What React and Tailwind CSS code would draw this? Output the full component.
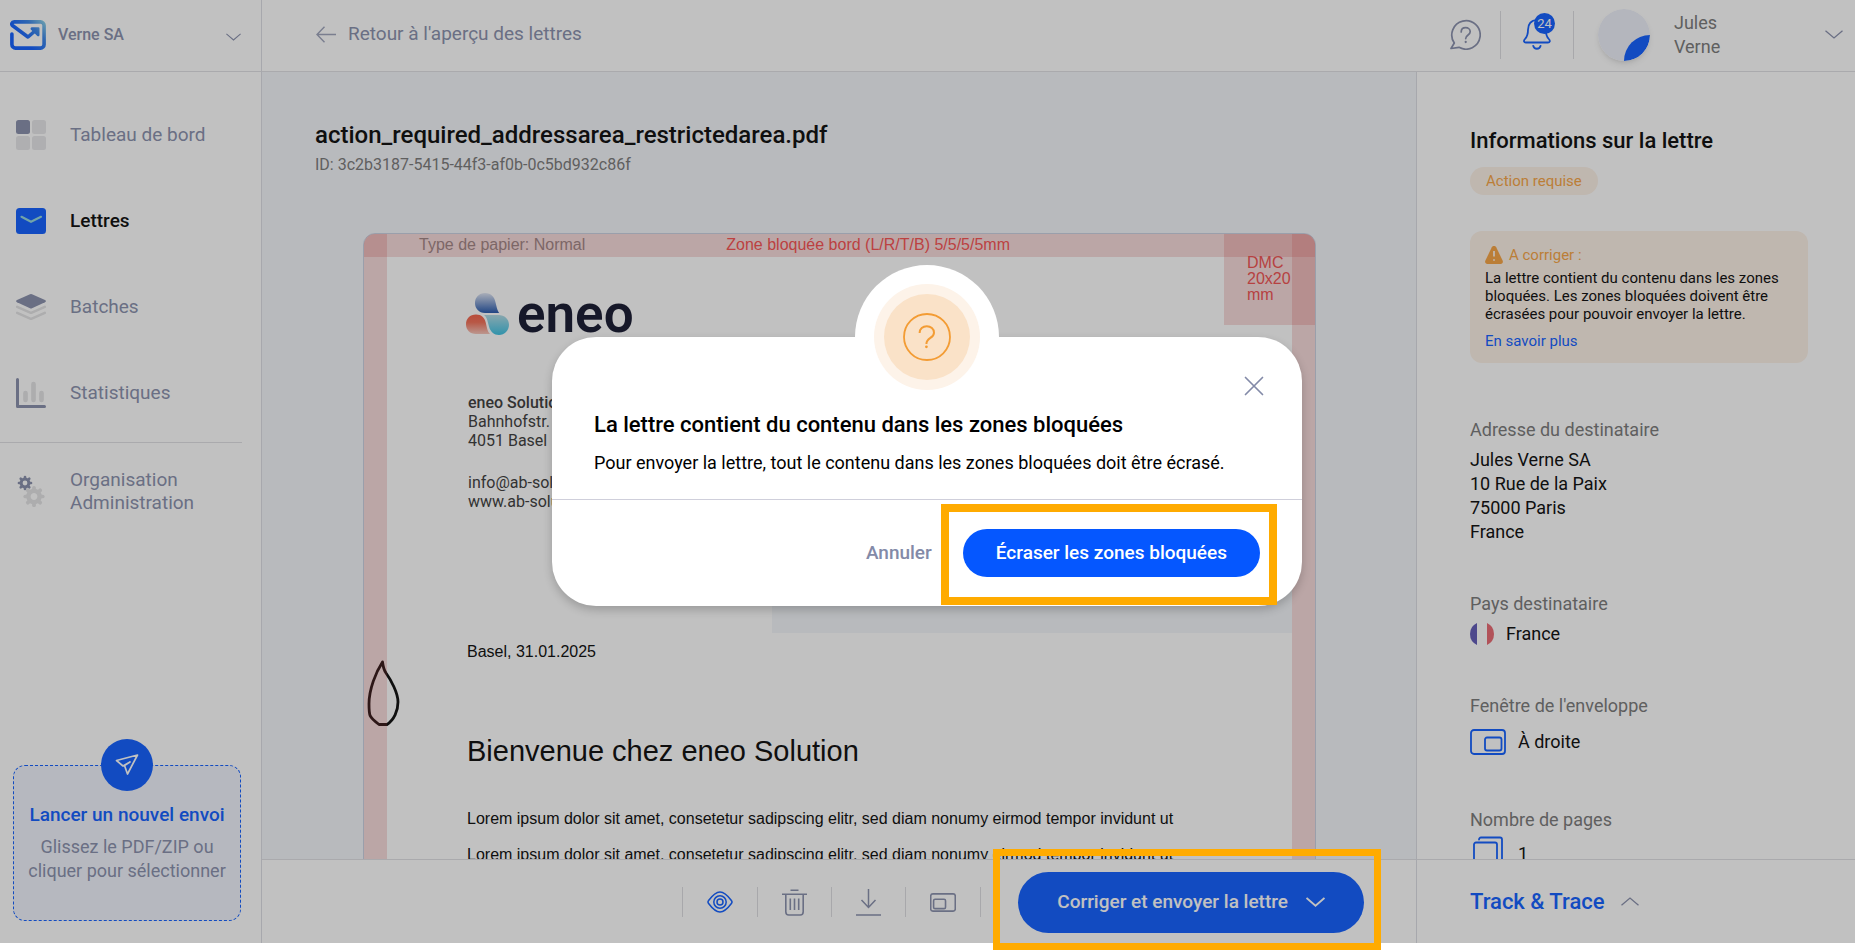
import React from "react";

const nav = [
  { label: "Tableau de bord", icon: DashboardIcon },
  { label: "Lettres", icon: LettersIcon, active: true },
  { label: "Batches", icon: BatchesIcon },
  { label: "Statistiques", icon: StatsIcon },
];

function LogoIcon() {
  return (
    <svg width="36" height="30" viewBox="0 0 36 30" fill="none" aria-hidden="true">
      <defs>
        <linearGradient id="brand" x1="14" y1="20" x2="35" y2="1" gradientUnits="userSpaceOnUse">
          <stop offset="0" stopColor="#0557ff" />
          <stop offset="0.55" stopColor="#2f7fe8" />
          <stop offset="1" stopColor="#86cfe4" />
        </linearGradient>
      </defs>
      <path d="M1.9 14v10.5a3.6 3.6 0 0 0 3.6 3.6h25a3.6 3.6 0 0 0 3.6-3.6v-19a3.6 3.6 0 0 0-3.6-3.6H4.2C1.8 1.9 1 4.300 2.800 5.800L18 17l7.500-6.500" stroke="url(#brand)" strokeWidth="3.6" strokeLinecap="round" strokeLinejoin="round" />
      <path d="M22 7.200h6.500a1 1 0 0 1 1 1V15c0 1.300-1.300 1.700-2.200.9l-6-5.800C20 8.800 20.500 7.200 22 7.200z" fill="url(#brand)" />
    </svg>
  );
}

function Chevron({ up, className, w = 18, h = 9, sw = 1.3 }) {
  return (
    <svg className={className} width={w} height={h} viewBox="0 0 18 9" fill="none" stroke="currentColor" strokeWidth={sw} aria-hidden="true">
      <path d={up ? "M.5 8.300 9 1l8.500 7.300" : "M.5.7 9 8 17.500.7"} />
    </svg>
  );
}

function DashboardIcon() {
  return (
    <svg width="30" height="30" viewBox="0 0 30 30" aria-hidden="true">
      <rect width="14" height="14" rx="2.500" fill="#838aa8" />
      <rect x="16" width="14" height="14" rx="2.500" fill="#e6e6e8" />
      <rect y="16" width="14" height="14" rx="2.500" fill="#e6e6e8" />
      <rect x="16" y="16" width="14" height="14" rx="2.500" fill="#e6e6e8" />
    </svg>
  );
}
function LettersIcon() {
  return (
    <svg width="30" height="30" viewBox="0 0 30 30" fill="none" aria-hidden="true">
      <rect y="2" width="30" height="26" rx="3.500" fill="#0557ff" />
      <path d="m5.500 10.800 9.500 5 10-5" stroke="#8fd6dc" strokeWidth="2.200" strokeLinecap="round" strokeLinejoin="round" />
    </svg>
  );
}
function BatchesIcon() {
  return (
    <svg width="30" height="30" viewBox="0 0 30 30" fill="none" aria-hidden="true">
      <path d="M14 2.300a2.500 2.500 0 0 1 2 0l13 5.800c1.200.6 1.200 1.500 0 2.100l-13 6a2.500 2.500 0 0 1-2 0L1 10.200c-1.200-.6-1.200-1.500 0-2.100z" fill="#838aa8" />
      <path d="m1.200 14.800 13 5.800a2 2 0 0 0 1.600 0l13-5.800M1.200 20.800l13 5.800a2 2 0 0 0 1.600 0l13-5.800" stroke="#e2e2e4" strokeWidth="2.400" strokeLinecap="round" />
    </svg>
  );
}
function StatsIcon() {
  return (
    <svg width="30" height="30" viewBox="0 0 30 30" fill="none" strokeLinecap="round" aria-hidden="true">
      <path d="M1.500 1.500v27h27" stroke="#838aa8" strokeWidth="3" strokeLinejoin="round" />
      <path d="M9.500 15v7M17.500 6v16M25.500 15v7" stroke="#e2e2e4" strokeWidth="4.600" />
    </svg>
  );
}
function Gear({ cx, cy, r, color, teeth, hole }) {
  return (
    <g transform={`translate(${cx} ${cy})`} fill="none" stroke={color}>
      <circle r={(r + hole) / 2} strokeWidth={r - hole} />
      {Array.from({ length: teeth }, (_, i) => (
        <path key={i} d={`M0 ${-r + 1}V${-r - r * 0.12}`} strokeWidth={r * 0.48} strokeLinecap="round" transform={`rotate(${(360 / teeth) * i})`} />
      ))}
    </g>
  );
}
function GearsIcon() {
  return (
    <svg width="30" height="32" viewBox="0 0 30 32" aria-hidden="true">
      <Gear cx={9} cy={8} r={5.4} hole={2.4} teeth={8} color="#838aa8" />
      <Gear cx={18} cy={21.500} r={7.800} hole={3.400} teeth={8} color="#e2e2e4" />
    </svg>
  );
}
function HelpIcon() {
  return (
    <svg width="31" height="31" viewBox="0 0 31 31" fill="none" stroke="#838aa8" strokeWidth="1.700" strokeLinecap="round" strokeLinejoin="round" aria-hidden="true">
      <path d="M1 29.500 4.300 24A14.200 14.200 0 1 1 9 28.300z" />
      <path d="M11.200 13c0-2.700 2-4.300 4.500-4.300s4.500 1.700 4.500 4.100c0 3.400-4.500 3-4.500 6.800" />
      <path d="M15.700 22.800v.3" strokeWidth="2.200" />
    </svg>
  );
}
function BellIcon() {
  return (
    <svg width="28" height="31" viewBox="0 0 28 31" fill="none" stroke="#0557ff" strokeWidth="1.800" strokeLinecap="round" strokeLinejoin="round" aria-hidden="true">
      <path d="M13.900 1.200C7.900 1.200 5 5.200 5 10.700c0 4.800-.6 6.800-3 9.300-1.800 1.900-1 3.500.8 3.500H25c1.800 0 2.600-1.600.8-3.500-2.400-2.500-3-4.500-3-9.300 0-5.500-2.900-9.500-8.900-9.500z" />
      <path d="M10.200 26.800a3.800 3.800 0 0 0 7.400 0" />
    </svg>
  );
}
function WindowIcon({ right, className, w, h, sw }) {
  return (
    <svg className={className} width={w} height={h} viewBox="0 0 36 26" fill="none" stroke="currentColor" strokeWidth={sw} aria-hidden="true">
      <rect x="1" y="1" width="34" height="24" rx="3" />
      <rect x={right ? 15 : 5} y="8.500" width="16.500" height="13" rx="2" />
    </svg>
  );
}
function EneoMark() {
  return (
    <svg width="43" height="42" viewBox="0 0 43 42" aria-hidden="true">
      <defs>
        <linearGradient id="eb" x1="0" y1="0" x2="0" y2="1"><stop stopColor="#dde3f2" /><stop offset="1" stopColor="#1b4fa8" /></linearGradient>
        <linearGradient id="er" x1="0" y1="0" x2="0" y2="1"><stop stopColor="#f2583f" /><stop offset=".4" stopColor="#f2684f" /><stop offset="1" stopColor="#f6c3b8" /></linearGradient>
        <linearGradient id="ec" x1="0" y1="0" x2="0" y2="1"><stop stopColor="#aed9e4" /><stop offset="1" stopColor="#30bde0" /></linearGradient>
      </defs>
      <path d="M19 0c6 0 9.500 4 10.400 9l1.500 6c.6 2.300 1.300 3.700 2.300 5H19C13 20 9 15.500 9 10S13 0 19 0z" fill="url(#eb)" />
      <path d="M10 21.500c5.500 0 8.700 3.500 9.700 8l1.300 5.500c.6 2.500 1.500 4.500 3 6H10C4 41 0 36.800 0 31.200s4-9.700 10-9.700z" fill="url(#er)" />
      <path d="M18 22h14.500c6 0 10.500 4 10.500 9.800S38.500 42 33 42c-5 0-8.600-3.200-10-8.500l-1.700-6.300C20.700 25 19.700 23.200 18 22z" fill="url(#ec)" />
    </svg>
  );
}

function Divider() {
  return <span className="h-[30px] w-px bg-[#dcdce0]" />;
}
function Field({ label, children, className }) {
  return (
    <section className={className}>
      <h3 className="text-[18px] leading-6 text-[#737373]">{label}</h3>
      {children}
    </section>
  );
}

export default function App() {
  return (
    <div className="h-screen overflow-hidden bg-white pb-2 font-['Roboto',sans-serif] text-black">
      <div className="relative flex h-full">
        <aside className="flex w-[262px] shrink-0 flex-col border-r border-[#dadce2] bg-white">
          <button type="button" className="flex h-[72px] shrink-0 items-center border-b border-[#dfdfe2] pr-5 pb-0.5 pl-[10px] text-left">
            <LogoIcon />
            <span className="ml-3 flex-1 text-[16px] font-medium text-[#838aa8]">Verne SA</span>
            <Chevron className="mt-1 text-[#838aa8]" w={15} h={8} />
          </button>
          <nav className="flex flex-col pt-5">
            {nav.map(({ label, icon: Icon, active }) => (
              <a key={label} href="#" className={active ? "flex h-[86px] items-center gap-6 pl-4 text-[19px] font-medium text-black" : "flex h-[86px] items-center gap-6 pl-4 text-[19px] text-[#838aa8]"}>
                <Icon />
                {label}
              </a>
            ))}
            <hr className="mt-1.5 mr-[19px] border-[#dfdfe2]" />
            <a href="#" className="mt-[25px] flex items-center gap-6 pl-4 text-[19px] leading-[23px] text-[#838aa8]">
              <GearsIcon />
              <span>Organisation<br />Administration</span>
            </a>
          </nav>
          <button type="button" className="relative mx-[13px] mt-auto mb-[22px] mr-5 flex h-[156px] flex-col items-center rounded-xl border border-dashed border-[#0557ff] bg-[#eff3fd] pt-[37px]">
            <span className="absolute -top-[27px] flex size-[52px] items-center justify-center rounded-full bg-[#0557ff]">
              <svg width="24" height="24" viewBox="0 0 24 24" fill="none" stroke="#fff" strokeWidth="1.700" strokeLinejoin="round" aria-hidden="true">
                <path d="M1.500 7.500 22.500 2l-10 19-3-8.500L15 9l-7 4z" />
              </svg>
            </span>
            <span className="text-[19px] leading-6 font-medium text-[#0557ff]">Lancer un nouvel envoi</span>
            <span className="mt-2 text-[18px] leading-6 text-[#838aa8]">Glissez le PDF/ZIP ou<br />cliquer pour sélectionner</span>
          </button>
        </aside>

        <div className="flex min-w-0 flex-1 flex-col">
          <header className="flex h-[72px] shrink-0 items-center border-b border-[#dfdfe2] bg-white pb-0.5 pl-[54px]">
            <a href="#" className="flex items-center gap-3 text-[19px] text-[#838aa8]">
              <svg width="20" height="17" viewBox="0 0 20 17" fill="none" stroke="#9aa0b8" strokeWidth="1.400" aria-hidden="true"><path d="M20 8.500H1M8.500.7 1 8.500l7.500 7.800" /></svg>
              Retour à l'aperçu des lettres
            </a>
            <div className="ml-auto flex items-center">
              <button type="button" aria-label="Aide" className="mr-[19px]"><HelpIcon /></button>
              <span className="h-12 w-px bg-[#dcdce0]" />
              <button type="button" aria-label="Notifications" className="relative mx-[22px]">
                <BellIcon />
                <span className="absolute -top-1.5 left-[11px] flex size-[21px] items-center justify-center rounded-full bg-[#0557ff] text-[13px] text-white">24</span>
              </button>
              <span className="h-12 w-px bg-[#dcdce0]" />
              <button type="button" className="flex w-[281px] items-center pr-3 pl-6 text-left">
                <svg className="rounded-full shadow-md" width="52" height="52" viewBox="0 0 52 52" aria-hidden="true">
                  <circle cx="26" cy="26" r="26" fill="#eceffa" />
                  <path d="M26 52A26 26 0 0 1 52 26A26 26 0 0 1 26 52z" fill="#0557ff" />
                </svg>
                <span className="ml-6 flex-1 text-[18px] leading-6 text-[#737373]">Jules<br />Verne</span>
                <Chevron className="text-[#838aa8]" />
              </button>
            </div>
          </header>

          <div className="flex min-h-0 flex-1">
            <div className="flex min-w-0 flex-1 flex-col">
              <main className="min-h-0 flex-1 overflow-hidden bg-[#f3f5fa] pt-12">
                <h1 className="pl-[53px] text-[24px] leading-[30px] font-medium">action_required_addressarea_restrictedarea.pdf</h1>
                <p className="pl-[53px] text-[16px] leading-[30px] text-[#737373]">ID: 3c2b3187-5415-44f3-af0b-0c5bd932c86f</p>
                <article className="relative mt-[53px] mr-[100px] ml-[101px] h-[1348px] overflow-hidden rounded-xl border border-[#c8cfe0] bg-white font-['Liberation_Sans',sans-serif] text-[16px]">
                  <div className="flex h-[22px] items-center pl-[55px] text-[#8f8f8f]">Type de papier: Normal</div>
                  <div className="flex items-center gap-2 pt-[22px] pl-[102px]">
                    <EneoMark />
                    <span className="font-['Roboto',sans-serif] text-[53px] leading-[72px] font-semibold text-[#0b0e26]">eneo</span>
                  </div>
                  <div className="pt-[43px] pl-[104px] font-['Roboto',sans-serif] leading-[19px] text-[#333]">
                    <p className="font-medium">eneo Solution AG</p>
                    <p>Bahnhofstr. 1</p>
                    <p>4051 Basel</p>
                    <p className="mt-[23px]">info@ab-solution.ch</p>
                    <p>www.ab-solution.ch</p>
                  </div>
                  <div className="pl-[103px]">
                    <p className="mt-[129px] leading-6">Basel, 31.01.2025</p>
                    <h2 className="mt-[67px] text-[29px] leading-10">Bienvenue chez eneo Solution</h2>
                    <p className="mt-[30px] leading-9">Lorem ipsum dolor sit amet, consetetur sadipscing elitr, sed diam nonumy eirmod tempor invidunt ut</p>
                    <p className="leading-9">Lorem ipsum dolor sit amet, consetetur sadipscing elitr, sed diam nonumy eirmod tempor invidunt ut</p>
                  </div>
                  <svg className="absolute top-[426px] left-[3px]" width="33" height="67" viewBox="0 0 33 67" fill="none" stroke="#000" strokeWidth="2.800" strokeLinejoin="round" aria-hidden="true">
                    <path d="M15.500 2C9 12 2 29 2 44c0 12 0 13 10 20.500h8C27 60 31 51 31 42c0-9-7-22-12-29-2-3-3-7-3.500-11z" />
                  </svg>
                  <div className="absolute top-[200px] right-[23px] h-[199px] w-[520px] bg-[#f3f5fa]" />
                  <div className="absolute inset-x-0 top-0 h-[23px] bg-[#d73c3c]/20 pr-[305px] text-right leading-[22px] text-[#f84848]">Zone bloquée bord (L/R/T/B) 5/5/5/5mm</div>
                  <div className="absolute inset-y-0 left-0 w-[23px] bg-[#d73c3c]/20" />
                  <div className="absolute inset-y-0 right-0 w-[23px] bg-[#d73c3c]/20" />
                  <div className="absolute top-0 right-0 h-[91px] w-[91px] bg-[#d73c3c]/20 pt-[21px] pl-[23px] leading-4 text-[#f04848]">DMC<br />20x20<br />mm</div>
                </article>
              </main>
              <footer className="flex h-[84px] shrink-0 items-center border-t border-[#dfdfe2] bg-white pt-px pr-[52px]">
                <div className="mr-[37px] ml-auto flex items-center gap-6 text-[#838aa8]">
                  <Divider />
                  <button type="button" aria-label="Aperçu" className="text-[#0557ff]">
                    <svg width="26" height="22" viewBox="0 0 26 22" fill="none" stroke="currentColor" strokeWidth="1.500" aria-hidden="true">
                      <path d="M1.600 9.500C5 5 8.500 1 13 1s8 4 11.400 8.500c.8 1 .8 2 0 3C21 17 17.500 21 13 21s-8-4-11.400-8.500c-.8-1-.8-2 0-3z" />
                      <circle cx="13" cy="11" r="6.200" /><circle cx="13" cy="11" r="3" />
                    </svg>
                  </button>
                  <Divider />
                  <button type="button" aria-label="Supprimer">
                    <svg width="25" height="27" viewBox="0 0 25 27" fill="none" stroke="currentColor" strokeWidth="1.600" aria-hidden="true">
                      <path d="M8.500 1.200h8M0 5.200h25M3.800 5.200v17.500c0 2.200 1 3.300 3 3.300h11.400c2 0 3-1.100 3-3.300V5.200M8.300 9.500V21M12.500 9.500V21M16.700 9.500V21" />
                    </svg>
                  </button>
                  <Divider />
                  <button type="button" aria-label="Télécharger">
                    <svg width="25" height="27" viewBox="0 0 25 27" fill="none" stroke="currentColor" strokeWidth="1.500" aria-hidden="true">
                      <path d="M12.500 0v18.500M5.500 11l7 7.500 7-7.500M0 26h25" />
                    </svg>
                  </button>
                  <Divider />
                  <button type="button" aria-label="Fenêtre"><WindowIcon w={26} h={19} sw={2.2} /></button>
                  <Divider />
                </div>
                <div className="relative">
                  <button type="button" className="flex h-[61px] items-center gap-[18px] rounded-full bg-[#0557ff] px-[39px] text-[19px] font-medium text-white">
                    Corriger et envoyer la lettre
                    <Chevron w={19} h={10} sw={1.8} />
                  </button>
                  <div className="pointer-events-none absolute -top-[23px] -right-[17px] -bottom-[17px] -left-[25px] z-50 border-7 border-[#ffab00]" />
                </div>
              </footer>
            </div>

            <aside className="flex w-[439px] shrink-0 flex-col border-l border-[#dadce2] bg-white">
              <div className="min-h-0 flex-1 overflow-hidden pt-[54px] pr-[47px] pl-[53px] text-[18px] leading-6">
                <h2 className="text-[22px] leading-[30px] font-medium">Informations sur la lettre</h2>
                <span className="mt-[11px] inline-block rounded-full bg-[#fdf1e6] px-4 text-[15px] leading-7 text-[#f7a03a]">Action requise</span>
                <div className="mt-[36px] rounded-xl bg-[#fdf1e6] pt-3 pr-4 pb-2.5 pl-[15px] text-[15px] leading-[18px]">
                  <p className="flex items-center gap-1.5 leading-6 text-[#f7a03a]">
                    <svg width="18" height="18" viewBox="0 0 18 18" aria-hidden="true">
                      <path d="M6.800 1.300C7.600-.3 10.400-.3 11.200 1.300l6.400 13.200c.8 1.700-.2 3.500-2 3.500H2.400c-1.800 0-2.800-1.800-2-3.500z" fill="#f7a03a" />
                      <path d="M9 5v5.500M9 13.300v1.400" stroke="#fdf1e6" strokeWidth="1.800" />
                    </svg>
                    A corriger :
                  </p>
                  <p className="mt-0.5">La lettre contient du contenu dans les zones bloquées. Les zones bloquées doivent être écrasées pour pouvoir envoyer la lettre.</p>
                  <a href="#" className="mt-1.5 block leading-[24px] text-[#0557ff]">En savoir plus</a>
                </div>
                <Field label="Adresse du destinataire" className="mt-[55px]">
                  <address className="mt-1.5 not-italic">Jules Verne SA<br />10 Rue de la Paix<br />75000 Paris<br />France</address>
                </Field>
                <Field label="Pays destinataire" className="mt-12">
                  <p className="mt-1.5 flex items-center gap-3">
                    <svg width="24" height="24" viewBox="0 0 24 24" aria-hidden="true">
                      <path d="M7 1.100a12 12 0 0 0 0 21.800z" fill="#5a52b4" /><path d="M17 1.100a12 12 0 0 1 0 21.800z" fill="#e8606a" />
                    </svg>
                    France
                  </p>
                </Field>
                <Field label="Fenêtre de l'enveloppe" className="mt-12">
                  <p className="mt-[11px] flex items-center gap-3"><WindowIcon right w={36} h={26} sw={1.8} className="text-[#0557ff]" />À droite</p>
                </Field>
                <Field label="Nombre de pages" className="mt-[53px]">
                  <p className="mt-1 flex items-center gap-3">
                    <svg width="36" height="36" viewBox="0 0 36 36" fill="none" stroke="#0557ff" strokeWidth="1.800" strokeLinecap="round" aria-hidden="true">
                      <rect x="4" y="6.500" width="23" height="28" rx="2" />
                      <path d="M9 3.500a2 2 0 0 1 2-2h19a2 2 0 0 1 2 2V28" />
                    </svg>
                    1
                  </p>
                </Field>
              </div>
              <button type="button" className="flex h-[84px] shrink-0 items-center gap-4 border-t border-[#dfdfe2] pl-[53px] text-[22px] font-medium text-[#0557ff]">
                Track &amp; Trace
                <Chevron up className="text-[#838aa8]" />
              </button>
            </aside>
          </div>
        </div>

        <div className="absolute inset-0 z-40 flex items-center justify-center bg-[#333]/30 pr-px">
          <div role="dialog" aria-modal="true" aria-labelledby="dialog-title" className="relative w-[750px] rounded-[44px] bg-white shadow-[0_4px_10px_rgba(0,0,0,0.2)]">
            <div className="absolute -top-[72px] left-1/2 flex size-36 -translate-x-1/2 items-center justify-center rounded-full bg-white">
              <div className="flex size-[106px] items-center justify-center rounded-full bg-[#fdf3e9]">
                <div className="flex size-[86px] items-center justify-center rounded-full bg-[#fae2c8]">
                  <svg width="48" height="48" viewBox="0 0 48 48" fill="none" stroke="#f39c34" strokeWidth="1.800" aria-hidden="true">
                    <circle cx="24" cy="24" r="23" />
                    <path d="M16.600 20c0-4.200 3.200-6.700 7.200-6.700s7.200 2.700 7.200 6.400c0 5.700-7.600 4.800-7.600 11.300" strokeWidth="2" />
                    <circle cx="23.400" cy="33.800" r="1.400" fill="#f39c34" stroke="none" />
                  </svg>
                </div>
              </div>
            </div>
            <button type="button" aria-label="Fermer" className="absolute top-[39px] right-[38px] text-[#838aa8]">
              <svg width="20" height="20" viewBox="0 0 20 20" stroke="currentColor" strokeWidth="1.700" strokeLinecap="round" aria-hidden="true"><path d="m1.500 1.500 17 17m0-17-17 17" /></svg>
            </button>
            <div className="border-b border-[#cfcfdb] px-[42px] pt-[73px] pb-6">
              <h2 id="dialog-title" className="text-[22px] leading-[30px] font-medium">La lettre contient du contenu dans les zones bloquées</h2>
              <p className="mt-[11px] text-[18px] leading-6">Pour envoyer la lettre, tout le contenu dans les zones bloquées doit être écrasé.</p>
            </div>
            <div className="flex items-center justify-end gap-[31px] pt-[29px] pr-[42px] pb-[29px]">
              <button type="button" className="text-[19px] font-medium text-[#838aa8]">Annuler</button>
              <div className="relative">
                <button type="button" className="h-12 rounded-full bg-[#0557ff] px-[33px] text-[19px] font-medium text-white">Écraser les zones bloquées</button>
                <div className="pointer-events-none absolute -top-[25px] -right-[17px] -bottom-[28px] -left-[22px] border-8 border-[#ffab00]" />
              </div>
            </div>
          </div>
        </div>
      </div>
    </div>
  );
}
